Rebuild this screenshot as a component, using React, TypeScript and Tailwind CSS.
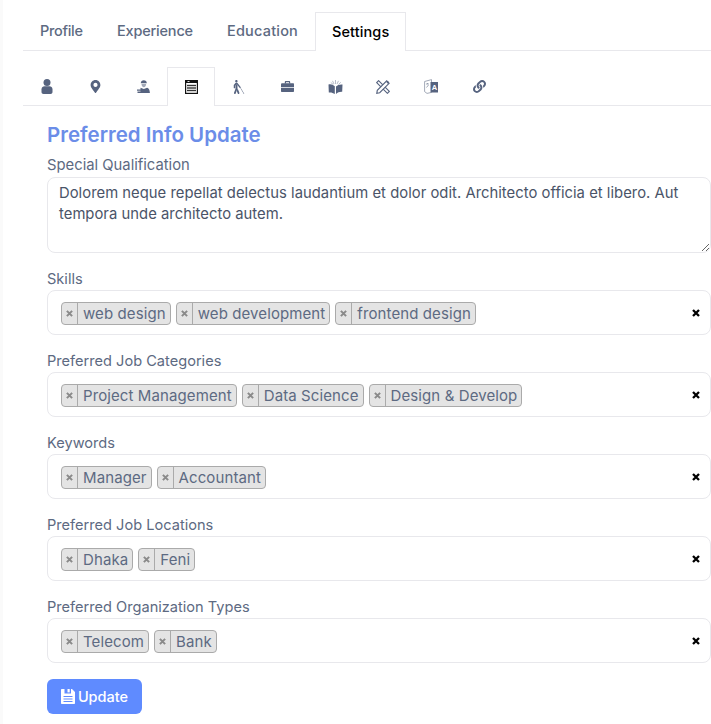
import React from "react";
import { FaMapMarkerAlt, FaBlind, FaLink } from "react-icons/fa";

const C = "#56637f";

const User = () => (
  <svg width="12" height="15" viewBox="0 0 12 15" className="block" fill={C}>
    <circle cx="6" cy="3.600" r="3.500" />
    <path d="M.5 10.500C.5 8.300 2 7.300 3.500 7.300h5c1.500 0 3 1 3 3.200V13c0 1.200-.8 2-2 2h-7c-1.200 0-2-.8-2-2z" />
  </svg>
);
const Newspaper = () => (
  <svg width="13" height="14" viewBox="0 0 13 14" className="block">
    <rect x="0.600" y="0.600" width="11.800" height="12.800" fill="#fff" stroke="#111" strokeWidth="1.200" />
    <rect x="0" y="0" width="13" height="3" fill="#111" />
    <rect x="2.500" y="1" width="2" height="1" fill="#ddd" />
    <rect x="2" y="4.800" width="9" height="1.400" fill="#333" />
    <rect x="2" y="7.300" width="9" height="1.400" fill="#333" />
    <rect x="2" y="9.800" width="9" height="1.400" fill="#333" />
  </svg>
);
const Worker = () => (
  <svg width="13" height="13" viewBox="0 0 13 13" className="block" fill={C}>
    <path d="M3.800 3.200C3.800 1.300 5 .3 6.800.3s3 1 3 2.900z" />
    <path d="M4.500 4h4.600c0 1.900-1 3.200-2.300 3.200S4.500 5.900 4.500 4z" opacity="0.55" />
    <path d="M3.500 7.800 6.800 9l3.300-1.200c1.600.4 2.600 1.700 2.800 5.200H3.500z" />
    <path d="M0 9.500h5v1.200H0zM.5 11.500h4.500V13H.5z" />
  </svg>
);
const Book = () => (
  <svg width="15" height="14" viewBox="0 0 15 14" className="block" fill={C}>
    <path d="M.5 4.500c2.200-.6 4.500 0 6.300 1.800V14c-1.800-1.300-4-1.900-6-1.500zM8 6.500C9.500 5 11.500 4.300 14.500 4.500l-.3 7.300c-2.500-.2-4.600.7-6.200 2.200z" />
    <path d="M7.500 0v4M4.500.8l1.500 3.200M10.500.8 9 4M12.800 2.300 10.500 4.500M2.800 2.500l2.500 2" stroke="#a4abba" strokeWidth="0.800" />
  </svg>
);
const RulerPencil = () => (
  <svg width="14" height="14" viewBox="0 0 14 14" className="block" fill="none" stroke={C} strokeWidth="1.150">
    <path d="M2.600.7.700 2.600 11.400 13.300 13.300 11.400z" />
    <path d="M10.700.9 13.100 3.300 3.700 12.700.8 13.200 1.300 10.300z" fill="#fff" />
    <path d="M11 1.500 12.500 3" strokeWidth="1.800" />
  </svg>
);
const Lang = () => (
  <svg width="14" height="15" viewBox="0 0 14 15" className="block">
    <path d="M.6 2.500 7.500.6v12.800L3 14.400.6 12.600z" fill="#fff" stroke="#8b94a6" strokeWidth="0.800" />
    <path d="M6.500 3H14v10.500H6.500z" fill={C} />
    <text x="7.800" y="11" fontSize="7.500" fontWeight="700" fill="#fff" fontFamily="Liberation Sans, sans-serif">A</text>
    <path d="M2 5h3M3.500 4v1M2.500 8.500 4.500 6" stroke="#7a8498" strokeWidth="0.700" fill="none" />
  </svg>
);
const Briefcase = () => (
  <svg width="13" height="11" viewBox="0 0 13 11" className="block" fill={C}>
    <path d="M3.800 2.500V1c0-.5.4-1 1-1h3.400c.6 0 1 .5 1 1v1.500H8V1.200H5v1.300z" />
    <path d="M0 3.200C0 2.700.4 2.300 1 2.300h11c.6 0 1 .4 1 .9V6H0z" />
    <path d="M0 6.800h13V10c0 .6-.4 1-1 1H1c-.6 0-1-.4-1-1z" />
  </svg>
);
const Floppy = () => (
  <svg width="14" height="15" viewBox="0 0 14 15" className="block" fill="#fff">
    <path fillRule="evenodd" d="M1 0h2.500v4.500h6.500V0h1L14 3v11c0 .6-.4 1-1 1H1c-.6 0-1-.4-1-1V1C0 .4.400 0 1 0zM2.500 7v1h9V7zm0 2.500v1h9v-1zm0 2.500v1h9v-1z" />
    <rect x="6.500" y="0" width="2.200" height="3.400" />
  </svg>
);
const X = ({ c = "#8a8a8a", s = 7 }: { c?: string; s?: number }) => (
  <svg width={s} height={s} viewBox="0 0 8 8" className="block">
    <path d="M1 1 7 7M7 1 1 7" stroke={c} strokeWidth="2.300" />
  </svg>
);

const Tag = ({ t }: { t: string }) => (
  <span className="flex h-[23px] items-stretch overflow-hidden rounded-[4px] border border-[#aaaaaa] bg-[#e4e4e4] text-[15px] tracking-[0.1px] text-[#5d6a82]">
    <span className="flex w-[16px] items-center justify-center border-r border-[#aaaaaa]"><X /></span>
    <span className="pl-[5px] pr-[4px] leading-[21px] whitespace-nowrap">{t}</span>
  </span>
);

const Field = ({ label, tags }: { label: string; tags: string[] }) => (
  <div>
    <div className="h-[22px] text-[14.6px] leading-[23px] text-[#5d6a82]">{label}</div>
    <div className="flex h-[45px] items-center rounded-[8px] border border-[#e8e8ec] bg-white pl-[13px] pr-[10px]">
      <div className="mt-[1px] flex flex-1 gap-[5px]">{tags.map((t) => <Tag key={t} t={t} />)}</div>
      <X c="#000" s={8} />
    </div>
  </div>
);

const icons = [
  <User />, <FaMapMarkerAlt size={13} />, <Worker />, <Newspaper />, <FaBlind size={14} />,
  <Briefcase />, <Book />, <RulerPencil />, <Lang />, <FaLink size={13} />,
];

export default function App() {
  return (
    <div className="min-h-[724px] w-[711px] overflow-hidden border-l-[3px] border-[#fafafa] bg-white pl-[20px] font-['Inter',sans-serif]">
      <div className="flex h-[51px] items-end border-b border-[#e8e8ec] pt-[12px]">
        <div className="flex h-[38px] w-[77px] items-center pl-[17px] text-[14.5px] font-medium tracking-[-0.3px] text-[#5d6a82]">Profile</div>
        <div className="flex h-[38px] w-[110px] items-center pl-[17px] text-[14.5px] font-medium tracking-[-0.2px] text-[#5d6a82]">Experience</div>
        <div className="flex h-[38px] w-[105px] items-center pl-[17px] text-[14.5px] font-medium tracking-[0.2px] text-[#5d6a82]">Education</div>
        <div className="-mb-px flex h-[39px] w-[91px] items-center border border-b-0 border-[#e8e8ec] bg-white pl-[16px] text-[14.5px] font-medium tracking-[0.1px] text-black">Settings</div>
      </div>
      <div className="mt-[16px] flex h-[39px] items-end border-b border-[#e8e8ec] text-[#56637f]">
        {icons.map((ic, i) => (
          <div key={i} className={`-mb-px flex h-[39px] w-[48px] items-center justify-center ${i === 3 ? "border border-b-0 border-[#e8e8ec] bg-white" : ""}`}>{ic}</div>
        ))}
      </div>
      <div className="pl-[24px]">
        <h2 className="mt-[15px] h-[28px] text-[20.5px] font-semibold leading-[28px] text-[#6b8de8]">Preferred Info Update</h2>
        <div className="mt-[6px] h-[20px] text-[14.8px] leading-[20px] text-[#5d6a82]">Special Qualification</div>
        <textarea
          readOnly
          className="mt-[2px] block h-[76px] w-full rounded-[8px] border border-[#e8e8ec] px-[11px] py-[5px] text-[14.8px] leading-[21px] tracking-[0.03px] text-[#4a5468] outline-none"
          value="Dolorem neque repellat delectus laudantium et dolor odit. Architecto officia et libero. Aut tempora unde architecto autem."
        />
        <div className="mt-[15px] flex flex-col gap-[15px]">
          <Field label="Skills" tags={["web design", "web development", "frontend design"]} />
          <Field label="Preferred Job Categories" tags={["Project Management", "Data Science", "Design & Develop"]} />
          <Field label="Keywords" tags={["Manager", "Accountant"]} />
          <Field label="Preferred Job Locations" tags={["Dhaka", "Feni"]} />
          <Field label="Preferred Organization Types" tags={["Telecom", "Bank"]} />
        </div>
        <button className="mt-[16px] flex h-[35px] w-[95px] items-center justify-center gap-[3px] rounded-[6px] bg-[#5f8bff] text-[14.5px] font-medium text-white">
          <Floppy /> Update
        </button>
      </div>
    </div>
  );
}
